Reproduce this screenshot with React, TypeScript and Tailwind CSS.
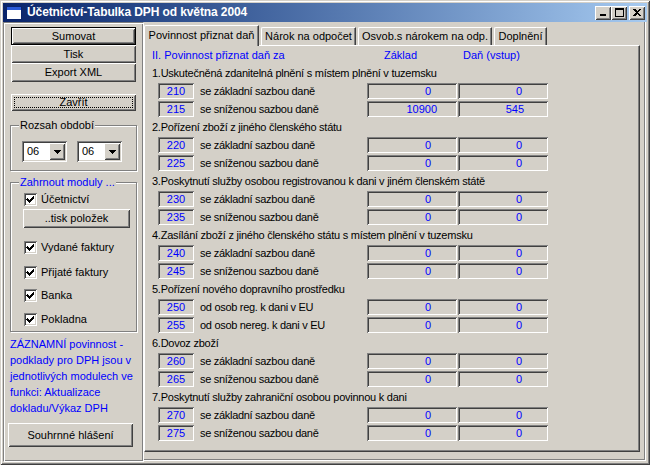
import React from "react";

// classic 3D edges
const raised =
  "shadow-[inset_1px_1px_#ffffff,inset_-1px_-1px_#404040,inset_2px_2px_#d4d0c8,inset_-2px_-2px_#808080]";
const sunken =
  "shadow-[inset_1px_1px_#808080,inset_-1px_-1px_#ffffff,inset_2px_2px_#404040,inset_-2px_-2px_#d4d0c8]";

type Row = { code: string; label: string; base: string; tax: string };
type Section = { title: string; rows: Row[] };

const zakladni = "se základní sazbou daně";
const snizena = "se sníženou sazbou daně";

const sections: Section[] = [
  {
    title: "1.Uskutečněná zdanitelná plnění s místem plnění v tuzemsku",
    rows: [
      { code: "210", label: zakladni, base: "0", tax: "0" },
      { code: "215", label: snizena, base: "10900", tax: "545" },
    ],
  },
  {
    title: "2.Pořízení zboží z jiného členského státu",
    rows: [
      { code: "220", label: zakladni, base: "0", tax: "0" },
      { code: "225", label: snizena, base: "0", tax: "0" },
    ],
  },
  {
    title: "3.Poskytnutí služby osobou registrovanou k dani v jiném členském státě",
    rows: [
      { code: "230", label: zakladni, base: "0", tax: "0" },
      { code: "235", label: snizena, base: "0", tax: "0" },
    ],
  },
  {
    title: "4.Zasílání zboží z jiného členského státu s místem plnění v tuzemsku",
    rows: [
      { code: "240", label: zakladni, base: "0", tax: "0" },
      { code: "245", label: snizena, base: "0", tax: "0" },
    ],
  },
  {
    title: "5.Pořízení nového dopravního prostředku",
    rows: [
      { code: "250", label: "od osob reg. k dani v EU", base: "0", tax: "0" },
      { code: "255", label: "od osob nereg. k dani v EU", base: "0", tax: "0" },
    ],
  },
  {
    title: "6.Dovoz zboží",
    rows: [
      { code: "260", label: zakladni, base: "0", tax: "0" },
      { code: "265", label: snizena, base: "0", tax: "0" },
    ],
  },
  {
    title: "7.Poskytnutí služby zahraniční osobou povinnou k dani",
    rows: [
      { code: "270", label: zakladni, base: "0", tax: "0" },
      { code: "275", label: snizena, base: "0", tax: "0" },
    ],
  },
];

const valuePad = (v: string) => (v === "10900" ? "pr-[20px]" : v === "545" ? "pr-[24px]" : "pr-[26px]");

const CheckBox = ({ label }: { label: string }) => (
  <div className="flex items-center h-[13px]">
    <div className={`w-[13px] h-[13px] bg-white ${sunken}`}>
      <svg width="13" height="13" viewBox="0 0 13 13" shapeRendering="crispEdges">
        <path d="M3 5h1v1h1v1h1v-1h1v-1h1v-1h1v-1h1v3h-1v1h-1v1h-1v1h-1v1h-1v-1h-1v-1h-1v-1h-1z" fill="#000" />
      </svg>
    </div>
    <span className="ml-[4px]">{label}</span>
  </div>
);

const Combo = ({ value }: { value: string }) => (
  <div className={`w-[45px] h-[21px] bg-white flex items-center ${sunken}`}>
    <span className="flex-1 pl-[5px]">{value}</span>
    <div className={`w-[16px] h-[17px] mr-[2px] bg-[#d4d0c8] flex items-center justify-center ${raised}`}>
      <svg width="7" height="4" viewBox="0 0 7 4" shapeRendering="crispEdges">
        <path d="M0 0h7v1h-1v1h-1v1h-1v1h-1v-1h-1v-1h-1v-1h-1z" fill="#000" />
      </svg>
    </div>
  </div>
);

const TitleButton = ({ children, className = "" }: { children: React.ReactNode; className?: string }) => (
  <div className={`w-[16px] h-[14px] bg-[#d4d0c8] flex items-center justify-center ${raised} ${className}`}>
    {children}
  </div>
);

const Tab = ({ label, width, active, className = "" }: { label: string; width: string; active?: boolean; className?: string }) => (
  <div
    className={`${width} ${
      active ? "h-[21px] -mb-px z-10 pb-[2px]" : "h-[18px]"
    } relative bg-[#d4d0c8] border-t border-l border-white border-r border-r-[#404040] rounded-tl-[2px] shadow-[inset_-1px_0_#808080] flex items-center justify-center ${className}`}
  >
    {label}
  </div>
);

export default function App() {
  return (
    <div className="w-[650px] h-[465px] bg-[#d4d0c8] p-[3px] flex flex-col font-['Liberation_Sans',Arial,sans-serif] text-[11px] leading-[13px] text-black shadow-[inset_1px_1px_#d4d0c8,inset_-1px_-1px_#404040,inset_2px_2px_#ffffff,inset_-2px_-2px_#808080]">
      {/* Title bar */}
      <div className="h-[19px] bg-linear-to-r from-[#0a246a] to-[#a6caf0] flex items-center pl-[3px] pr-[2px]">
        <svg width="16" height="14" viewBox="0 0 16 14" shapeRendering="crispEdges">
          <rect x="0.5" y="0.5" width="15" height="13" fill="#ffffff" stroke="#0a246a" />
          <rect x="1" y="1" width="14" height="3" fill="#2a5ad7" />
        </svg>
        <span className="ml-[5px] text-white font-bold text-[12px] tracking-[-0.1px]">
          Účetnictví-Tabulka DPH od května 2004
        </span>
        <div className="ml-auto flex items-center">
          <TitleButton>
            <svg width="8" height="7" viewBox="0 0 8 7" shapeRendering="crispEdges">
              <rect x="1" y="5" width="6" height="2" fill="#000" />
            </svg>
          </TitleButton>
          <TitleButton>
            <svg width="9" height="9" viewBox="0 0 9 9" shapeRendering="crispEdges">
              <path d="M0 0h9v9h-9z M1 2v6h7v-6z" fill="#000" fillRule="evenodd" />
            </svg>
          </TitleButton>
          <TitleButton className="ml-[2px]">
            <svg width="8" height="7" viewBox="0 0 8 7" shapeRendering="crispEdges">
              <path d="M0 0h2l2 2l2-2h2l-3 3.5l3 3.5h-2l-2-2l-2 2h-2l3-3.5z" fill="#000" />
            </svg>
          </TitleButton>
        </div>
      </div>

      <div className="flex flex-1 min-h-0">
        {/* Left panel */}
        <div className="w-[141px] flex flex-col items-start pl-[6px] border border-t-[#808080] border-l-[#808080] border-r-white border-b-white shadow-[inset_1px_1px_#ffffff,inset_-1px_-1px_#808080]">
          <div className={`ml-px mt-[4px] w-[125px] h-[18px] border border-black flex items-center justify-center ${raised}`}>
            Sumovat
          </div>
          <div className={`ml-px w-[125px] h-[18px] flex items-center justify-center ${raised}`}>Tisk</div>
          <div className={`ml-px w-[125px] h-[19px] flex items-center justify-center ${raised}`}>Export XML</div>
          <div className={`ml-px mt-[12px] w-[125px] h-[17px] p-[3px] ${raised}`}>
            <div className="w-full h-full border border-dotted border-black flex items-center justify-center">Zavřít</div>
          </div>

          <fieldset className="mt-[8px] w-[127px] border border-[#808080] shadow-[inset_1px_1px_#ffffff,1px_1px_#ffffff]">
            <legend className="ml-[8px] px-[1px] bg-[#d4d0c8]">Rozsah období</legend>
            <div className="flex gap-[10px] pl-[11px] mt-[9px] mb-[8px]">
              <Combo value="06" />
              <Combo value="06" />
            </div>
          </fieldset>

          <fieldset className="mt-[5px] w-[127px] border border-[#808080] shadow-[inset_1px_1px_#ffffff,1px_1px_#ffffff]">
            <legend className="ml-[8px] px-[1px] bg-[#d4d0c8] text-[#0000ff]">Zahrnout moduly ...</legend>
            <div className="flex flex-col items-start pl-[13px] pb-[5px]">
              <div className="mt-[4px]">
                <CheckBox label="Účetnictví" />
              </div>
              <div className={`-ml-px mt-[3px] w-[107px] h-[19px] flex items-center justify-center ${raised}`}>
                ..tisk položek
              </div>
              <div className="mt-[13px]">
                <CheckBox label="Vydané faktury" />
              </div>
              <div className="mt-[12px]">
                <CheckBox label="Přijaté faktury" />
              </div>
              <div className="mt-[10px]">
                <CheckBox label="Banka" />
              </div>
              <div className="mt-[11px]">
                <CheckBox label="Pokladna" />
              </div>
            </div>
          </fieldset>

          <p className="mt-[4px] leading-[16px] text-[#0000ff]">
            ZÁZNAMNÍ povinnost -<br />
            podklady pro DPH jsou v<br />
            jednotlivých modulech ve<br />
            funkci: Aktualizace<br />
            dokladu/Výkaz DPH
          </p>

          <div className={`-ml-[2px] mt-[7px] w-[125px] h-[24px] flex items-center justify-center ${raised}`}>
            Souhrnné hlášení
          </div>
        </div>

        {/* Right panel */}
        <div className="flex-1 mr-px mb-px border-r border-b border-white shadow-[inset_-1px_-1px_#808080]">
          <div className="mt-[3px] w-[496px] h-[427px] flex flex-col">
            {/* Tabs */}
            <div className="h-[20px] flex items-end">
              <Tab label="Povinnost přiznat daň" width="w-[115px]" active />
              <Tab label="Nárok na odpočet" width="w-[95px]" className="ml-[2px]" />
              <Tab label="Osvob.s nárokem na odp." width="w-[134px]" className="ml-[2px]" />
              <Tab label="Doplnění" width="w-[53px]" className="ml-[2px]" />
            </div>

            {/* Tab page */}
            <div className="flex-1 border-t border-l border-white border-r border-b border-r-[#404040] border-b-[#404040] shadow-[inset_-1px_-1px_#808080]">
              <div className="h-[18px] flex items-center pl-[7px] text-[#0000ff]">
                <span className="w-[232px]">II. Povinnost přiznat daň za</span>
                <span className="w-[79px]">Základ</span>
                <span>Daň (vstup)</span>
              </div>

              {sections.map((s) => (
                <div key={s.title}>
                  <div className="h-[18px] flex items-center pl-[7px] tracking-[-0.25px]">{s.title}</div>
                  {s.rows.map((r) => (
                    <div key={r.code} className="h-[18px] flex items-center">
                      <div className={`ml-[13px] w-[36px] h-[16px] flex items-center justify-center text-[#0000ff] ${sunken}`}>
                        {r.code}
                      </div>
                      <span className="ml-[6px] w-[167px] tracking-[-0.3px]">{r.label}</span>
                      <div className={`w-[90px] h-[16px] flex items-center justify-end text-[#0000ff] ${valuePad(r.base)} ${sunken}`}>
                        {r.base}
                      </div>
                      <div className={`ml-px w-[90px] h-[16px] flex items-center justify-end text-[#0000ff] ${valuePad(r.tax)} ${sunken}`}>
                        {r.tax}
                      </div>
                    </div>
                  ))}
                </div>
              ))}
            </div>
          </div>
        </div>
      </div>
    </div>
  );
}
